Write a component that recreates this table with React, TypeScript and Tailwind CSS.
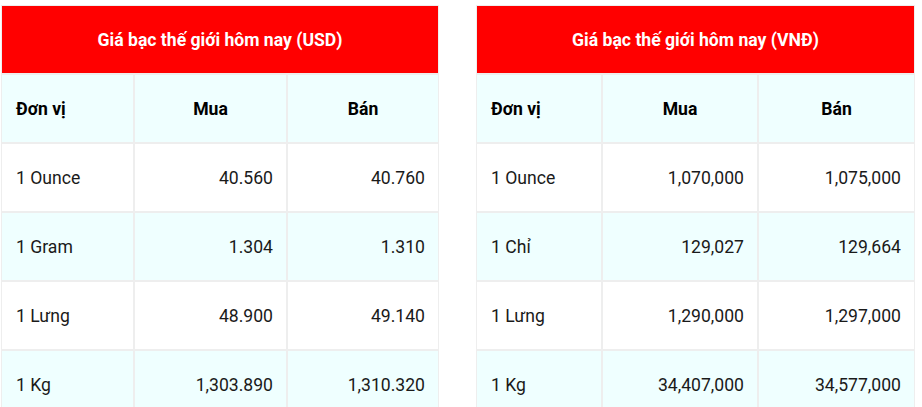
import React from 'react';

interface PriceRow {
  unit: string;
  buy: string;
  sell: string;
}

interface PriceTableProps {
  title: string;
  rows: PriceRow[];
  cols: [string, string, string];
}

const usdRows: PriceRow[] = [
  { unit: '1 Ounce', buy: '40.560', sell: '40.760' },
  { unit: '1 Gram', buy: '1.304', sell: '1.310' },
  { unit: '1 Lưng', buy: '48.900', sell: '49.140' },
  { unit: '1 Kg', buy: '1,303.890', sell: '1,310.320' },
];

const vndRows: PriceRow[] = [
  { unit: '1 Ounce', buy: '1,070,000', sell: '1,075,000' },
  { unit: '1 Chỉ', buy: '129,027', sell: '129,664' },
  { unit: '1 Lưng', buy: '1,290,000', sell: '1,297,000' },
  { unit: '1 Kg', buy: '34,407,000', sell: '34,577,000' },
];

const cell = 'border border-[#eeeeee] h-[69px]';

const PriceTable: React.FC<PriceTableProps> = ({ title, rows, cols }) => {
  return (
    <table className="table-fixed border-separate border-spacing-0 text-[17.6px] leading-[22px]">
      <colgroup>
        <col style={{ width: cols[0] }} />
        <col style={{ width: cols[1] }} />
        <col style={{ width: cols[2] }} />
      </colgroup>
      <thead>
        <tr>
          <th colSpan={3} className={`${cell} bg-[#ff0000] text-white font-bold text-center`}>
            {title}
          </th>
        </tr>
        <tr className="bg-[#efffff]">
          <th className={`${cell} text-left pl-[14px] font-bold text-black`}>Đơn vị</th>
          <th className={`${cell} text-center font-bold text-black`}>Mua</th>
          <th className={`${cell} text-center font-bold text-black`}>Bán</th>
        </tr>
      </thead>
      <tbody>
        {rows.map((r, i) => (
          <tr key={r.unit} className={i % 2 === 1 ? 'bg-[#efffff]' : 'bg-white'}>
            <td className={`${cell} pl-[14px] text-[#1a1a1a]`}>{r.unit}</td>
            <td className={`${cell} text-right pr-[13px] text-[#1a1a1a]`}>{r.buy}</td>
            <td className={`${cell} text-right pr-[13px] text-[#1a1a1a]`}>{r.sell}</td>
          </tr>
        ))}
      </tbody>
    </table>
  );
};

export default function App() {
  return (
    <div
      className="flex gap-[37px] pl-px pt-[5px] bg-white h-[407px] overflow-hidden"
      style={{ fontFamily: 'Roboto, "Noto Sans", sans-serif' }}
    >
      <PriceTable title="Giá bạc thế giới hôm nay (USD)" rows={usdRows} cols={['133px', '153px', '152px']} />
      <PriceTable title="Giá bạc thế giới hôm nay (VNĐ)" rows={vndRows} cols={['126px', '156px', '157px']} />
    </div>
  );
}
